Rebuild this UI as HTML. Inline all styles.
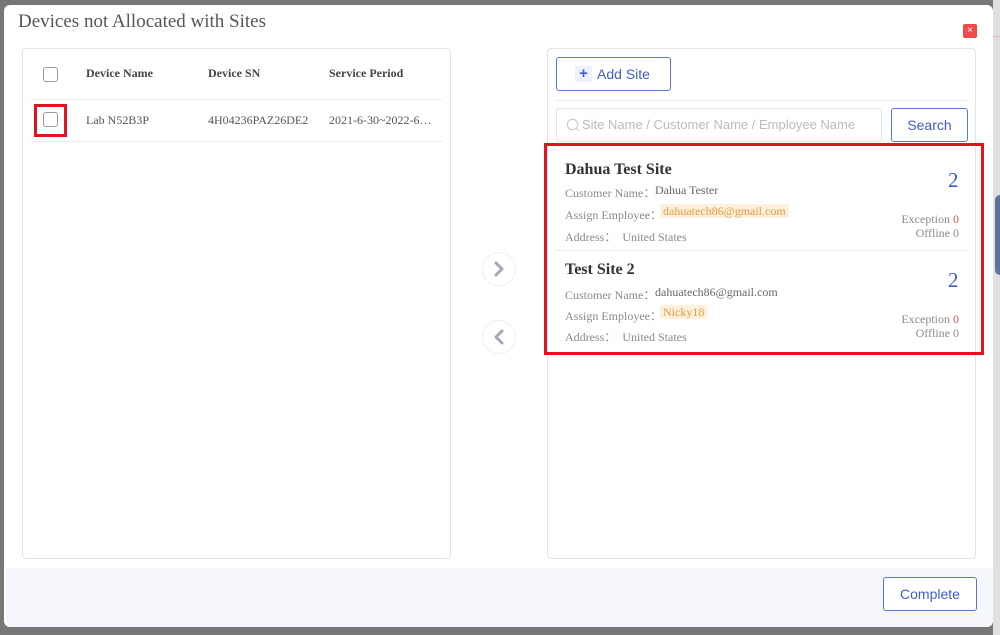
<!DOCTYPE html>
<html><head><meta charset="utf-8"><style>
*{margin:0;padding:0;box-sizing:border-box}
body{width:1000px;height:635px;background:#777;position:relative;overflow:hidden;font-family:"Liberation Serif",serif}
.a{position:absolute;white-space:nowrap}
.modal{position:absolute;left:4px;top:5px;width:989px;height:622px;background:#fff;border-radius:6px;overflow:hidden}
.panel{position:absolute;border:1px solid #e3e3e3;border-radius:4px;background:#fff}
.cb{position:absolute;width:15px;height:15px;border:1px solid #999;border-radius:3px;background:#fff}
.th{font-weight:bold;font-size:12px;color:#444}
.td{font-size:12px;color:#555}
.lab{font-size:12px;color:#8a8a8a}
.val{font-size:12px;color:#666}
.hl{background:#fdf1de;color:#e99a3c;padding:0 3px}
.num{font-size:21px;color:#3e5fc4}
.sm{font-size:12px;color:#8a8a8a;text-align:right}
.btn{position:absolute;border:1px solid #5b78c8;border-radius:3px;color:#3f5fc6;font-family:"Liberation Sans",sans-serif;font-size:14px;text-align:center;background:#fff}
.circ{position:absolute;width:34px;height:34px;border:1px solid #eee;border-radius:50%;background:#fff}
</style></head><body>
<div class="a" style="left:993px;top:0;width:7px;height:635px;background:#e0e0e0"></div>
<div class="a" style="left:993px;top:36px;width:7px;height:1px;background:#d9b8b8"></div>
<div class="a" style="left:995px;top:195px;width:5px;height:80px;background:#5a74a0;border-radius:6px 0 0 6px"></div>
<div class="modal">
  <div class="a" style="left:2px;top:563px;width:987px;height:59px;background:#f6f7fc;border-radius:0 0 6px 6px"></div>
</div>
<div class="a" style="left:18px;top:11px;font-size:19px;color:#555">Devices not Allocated with Sites</div>
<div class="a" style="left:963px;top:24px;width:14px;height:14px;background:#ef4b4b;border-radius:2px;color:#fff;font-size:10px;line-height:13px;text-align:center;font-family:'Liberation Sans',sans-serif">×</div>

<div class="panel" style="left:22px;top:48px;width:429px;height:511px"></div>
<div class="cb" style="left:43px;top:67px"></div>
<div class="a th" style="left:86px;top:66px">Device Name</div>
<div class="a th" style="left:208px;top:66px">Device SN</div>
<div class="a th" style="left:329px;top:66px">Service Period</div>
<div class="a" style="left:31px;top:99px;width:411px;height:1px;background:#ebebeb"></div>
<div class="cb" style="left:43px;top:112px"></div>
<div class="a" style="left:34px;top:104px;width:33px;height:33px;border:3px solid #e0141e"></div>
<div class="a td" style="left:86px;top:113px">Lab N52B3P</div>
<div class="a td" style="left:208px;top:113px">4H04236PAZ26DE2</div>
<div class="a td" style="left:329px;top:113px">2021-6-30~2022-6…</div>
<div class="a" style="left:31px;top:141px;width:411px;height:1px;background:#ebebeb"></div>

<div class="circ" style="left:482px;top:252px"></div>
<svg class="a" style="left:482px;top:252px" width="34" height="34"><path d="M14 11l6 6-6 6" stroke="#a4a8b4" stroke-width="3" fill="none" stroke-linecap="round" stroke-linejoin="round"/></svg>
<div class="circ" style="left:482px;top:320px"></div>
<svg class="a" style="left:482px;top:320px" width="34" height="34"><path d="M20 11l-6 6 6 6" stroke="#a4a8b4" stroke-width="3" fill="none" stroke-linecap="round" stroke-linejoin="round"/></svg>

<div class="panel" style="left:547px;top:48px;width:429px;height:511px"></div>
<div class="btn" style="left:556px;top:57px;width:115px;height:34px;line-height:32px;padding-left:20px">Add Site</div>
<div class="a" style="left:575px;top:66px;width:17px;height:16px;background:#eef1fb;color:#3f5fc6;font:bold 15px/16px 'Liberation Sans',sans-serif;text-align:center">+</div>
<div class="a" style="left:556px;top:100px;width:411px;height:1px;background:#ebebeb"></div>
<div class="a" style="left:556px;top:108px;width:326px;height:34px;border:1px solid #e3e3e3;border-radius:3px"></div>
<svg class="a" style="left:566px;top:118px" width="14" height="14"><circle cx="6.5" cy="6.5" r="5.2" stroke="#ccc" stroke-width="1.2" fill="none"/><path d="M10 10l3 3" stroke="#ccc" stroke-width="1.2"/></svg>
<div class="a" style="left:582px;top:117px;font:13px 'Liberation Sans',sans-serif;color:#bbb">Site Name / Customer Name / Employee Name</div>
<div class="btn" style="left:891px;top:108px;width:77px;height:34px;line-height:32px">Search</div>

<div class="a" style="left:565px;top:161px;font-size:16px;font-weight:bold;color:#333">Dahua Test Site</div>
<div class="a lab" style="left:565px;top:184px">Customer Name：</div>
<div class="a val" style="left:655px;top:183px">Dahua Tester</div>
<div class="a lab" style="left:565px;top:206px">Assign Employee：</div>
<div class="a val" style="left:660px;top:204px"><span class="hl">dahuatech86@gmail.com</span></div>
<div class="a lab" style="left:565px;top:228px">Address：&nbsp; United States</div>
<div class="a num" style="left:948px;top:168px">2</div>
<div class="a sm" style="right:41px;top:212px">Exception <span style="color:#e05050">0</span></div>
<div class="a sm" style="right:41px;top:226px">Offline 0</div>
<div class="a" style="left:556px;top:250px;width:411px;height:1px;background:#ebebeb"></div>

<div class="a" style="left:565px;top:261px;font-size:16px;font-weight:bold;color:#333">Test Site 2</div>
<div class="a lab" style="left:565px;top:286px">Customer Name：</div>
<div class="a val" style="left:655px;top:285px">dahuatech86@gmail.com</div>
<div class="a lab" style="left:565px;top:307px">Assign Employee：</div>
<div class="a val" style="left:660px;top:305px"><span class="hl">Nicky18</span></div>
<div class="a lab" style="left:565px;top:328px">Address：&nbsp; United States</div>
<div class="a num" style="left:948px;top:268px">2</div>
<div class="a sm" style="right:41px;top:312px">Exception <span style="color:#e05050">0</span></div>
<div class="a sm" style="right:41px;top:326px">Offline 0</div>

<div class="a" style="left:544px;top:143px;width:440px;height:212px;border:3px solid #e0141e"></div>

<div class="btn" style="left:883px;top:577px;width:94px;height:34px;line-height:32px">Complete</div>
</body></html>
